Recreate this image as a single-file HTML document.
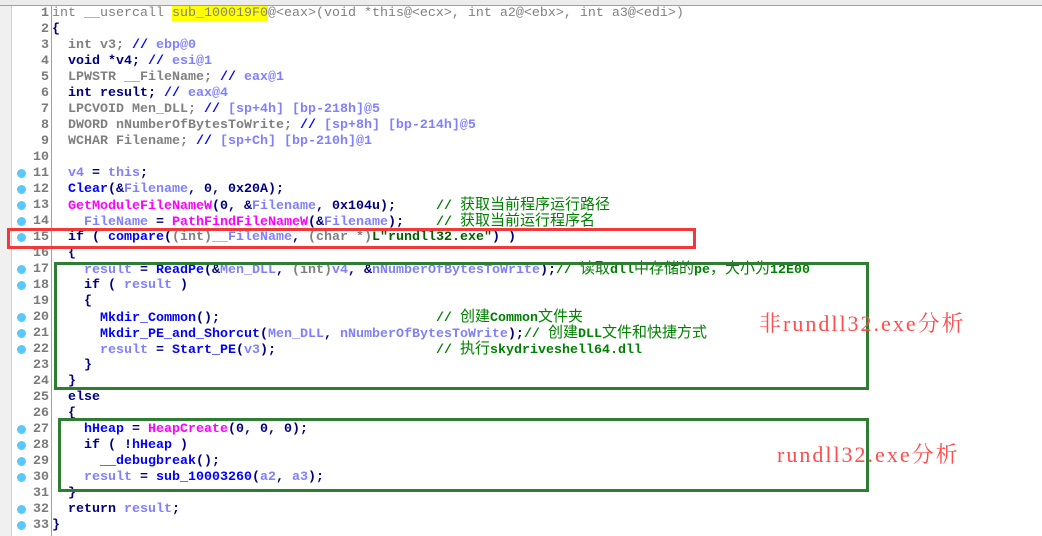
<!DOCTYPE html>
<html><head><meta charset="utf-8"><style>
body{margin:0;width:1042px;height:536px;background:#fff;position:relative;overflow:hidden;font-family:"Liberation Mono","Noto Sans CJK SC",monospace;}
.top{position:absolute;left:0;top:0;width:1042px;height:5px;background:#ececec;border-bottom:1px solid #a0a0a0;}
.left{position:absolute;left:0;top:6px;width:11px;height:530px;background:#f0f0f0;border-right:1px solid #d0d0d0;}
.sep{position:absolute;left:51px;top:6px;width:1px;height:530px;background:#a0a0a0;}
.ln{position:absolute;left:12px;width:37px;text-align:right;font-weight:bold;font-size:13.33px;color:#7a7a7a;line-height:16px;height:16px;}
.dot{position:absolute;left:17px;width:9px;height:9px;border-radius:50%;background:#5ac8fa;}
.c{position:absolute;left:52px;white-space:pre;font-weight:bold;font-size:13.33px;line-height:16px;height:16px;color:#000080;}
.k{color:#000080}.g{color:#808080;font-weight:normal}.gb{color:#808080}.b{color:#0000ff}.v{color:#8080ff}.m{color:#ff00ff}.cm{color:#008000}.s{color:#006000}
.z{font-size:15px;font-weight:normal}
.hl{background:#ffff00}
.box{position:absolute;box-sizing:border-box;}
.ann{position:absolute;font-family:"Liberation Serif","Noto Serif CJK SC",serif;font-size:22px;color:#ff4d4d;white-space:nowrap;line-height:24px;letter-spacing:2px;}
</style></head><body>
<div class="top"></div><div class="left"></div><div class="sep"></div>

<div class="ln" style="top:6px">1</div><div class="c" style="top:6px"><span class="g">int __usercall </span><span class="hl g">sub_100019F0</span><span class="g">@&lt;eax&gt;(void *this@&lt;ecx&gt;, int a2@&lt;ebx&gt;, int a3@&lt;edi&gt;)</span></div>
<div class="ln" style="top:22px">2</div><div class="c" style="top:22px">{</div>
<div class="ln" style="top:38px">3</div><div class="c" style="top:38px">  <span class="gb">int v3;</span> <span class="b">//</span> <span class="v">ebp@0</span></div>
<div class="ln" style="top:54px">4</div><div class="c" style="top:54px">  void *v4; <span class="b">//</span> <span class="v">esi@1</span></div>
<div class="ln" style="top:70px">5</div><div class="c" style="top:70px">  <span class="gb">LPWSTR __FileName;</span> <span class="b">//</span> <span class="v">eax@1</span></div>
<div class="ln" style="top:86px">6</div><div class="c" style="top:86px">  int result; <span class="b">//</span> <span class="v">eax@4</span></div>
<div class="ln" style="top:102px">7</div><div class="c" style="top:102px">  <span class="gb">LPCVOID Men_DLL;</span> <span class="b">//</span> <span class="v">[sp+4h] [bp-218h]@5</span></div>
<div class="ln" style="top:118px">8</div><div class="c" style="top:118px">  <span class="gb">DWORD nNumberOfBytesToWrite;</span> <span class="b">//</span> <span class="v">[sp+8h] [bp-214h]@5</span></div>
<div class="ln" style="top:134px">9</div><div class="c" style="top:134px">  <span class="gb">WCHAR Filename;</span> <span class="b">//</span> <span class="v">[sp+Ch] [bp-210h]@1</span></div>
<div class="ln" style="top:150px">10</div>
<div class="dot" style="top:169px"></div><div class="ln" style="top:166px">11</div><div class="c" style="top:166px">  <span class="v">v4</span> = <span class="v">this</span>;</div>
<div class="dot" style="top:185px"></div><div class="ln" style="top:182px">12</div><div class="c" style="top:182px">  <span class="b">Clear</span>(&amp;<span class="v">Filename</span>, 0, 0x20A);</div>
<div class="dot" style="top:201px"></div><div class="ln" style="top:198px">13</div><div class="c" style="top:198px">  <span class="m">GetModuleFileNameW</span>(0, &amp;<span class="v">Filename</span>, 0x104u);     <span class="cm">// <span class="z">获取当前程序运行路径</span></span></div>
<div class="dot" style="top:217px"></div><div class="ln" style="top:214px">14</div><div class="c" style="top:214px">    <span class="v">FileName</span> = <span class="m">PathFindFileNameW</span>(&amp;<span class="v">Filename</span>);    <span class="cm">// <span class="z">获取当前运行程序名</span></span></div>
<div class="dot" style="top:233px"></div><div class="ln" style="top:230px">15</div><div class="c" style="top:230px">  if ( <span class="b">compare</span>(<span class="gb">(int)</span><span class="v">__FileName</span>, <span class="gb">(char *)</span><span class="s">L"rundll32.exe"</span>) )</div>
<div class="ln" style="top:246px">16</div><div class="c" style="top:246px">  {</div>
<div class="dot" style="top:265px"></div><div class="ln" style="top:262px">17</div><div class="c" style="top:262px">    <span class="v">result</span> = <span class="b">ReadPe</span>(&amp;<span class="v">Men_DLL</span>, <span class="gb">(int)</span><span class="v">v4</span>, &amp;<span class="v">nNumberOfBytesToWrite</span>);<span class="cm">// <span class="z">读取</span>dll<span class="z">中存储的</span>pe<span class="z">，大小为</span>12E00</span></div>
<div class="dot" style="top:281px"></div><div class="ln" style="top:278px">18</div><div class="c" style="top:278px">    if ( <span class="v">result</span> )</div>
<div class="ln" style="top:294px">19</div><div class="c" style="top:294px">    {</div>
<div class="dot" style="top:313px"></div><div class="ln" style="top:310px">20</div><div class="c" style="top:310px">      <span class="b">Mkdir_Common</span>();                           <span class="cm">// <span class="z">创建</span>Common<span class="z">文件夹</span></span></div>
<div class="dot" style="top:329px"></div><div class="ln" style="top:326px">21</div><div class="c" style="top:326px">      <span class="b">Mkdir_PE_and_Shorcut</span>(<span class="v">Men_DLL</span>, <span class="v">nNumberOfBytesToWrite</span>);<span class="cm">// <span class="z">创建</span>DLL<span class="z">文件和快捷方式</span></span></div>
<div class="dot" style="top:345px"></div><div class="ln" style="top:342px">22</div><div class="c" style="top:342px">      <span class="v">result</span> = <span class="b">Start_PE</span>(<span class="v">v3</span>);                    <span class="cm">// <span class="z">执行</span>skydriveshell64.dll</span></div>
<div class="ln" style="top:358px">23</div><div class="c" style="top:358px">    }</div>
<div class="ln" style="top:374px">24</div><div class="c" style="top:374px">  }</div>
<div class="ln" style="top:390px">25</div><div class="c" style="top:390px">  else</div>
<div class="ln" style="top:406px">26</div><div class="c" style="top:406px">  {</div>
<div class="dot" style="top:425px"></div><div class="ln" style="top:422px">27</div><div class="c" style="top:422px">    <span class="b">hHeap</span> = <span class="m">HeapCreate</span>(0, 0, 0);</div>
<div class="dot" style="top:441px"></div><div class="ln" style="top:438px">28</div><div class="c" style="top:438px">    if ( !<span class="b">hHeap</span> )</div>
<div class="dot" style="top:457px"></div><div class="ln" style="top:454px">29</div><div class="c" style="top:454px">      <span class="b">__debugbreak</span>();</div>
<div class="dot" style="top:473px"></div><div class="ln" style="top:470px">30</div><div class="c" style="top:470px">    <span class="v">result</span> = <span class="b">sub_10003260</span>(<span class="v">a2</span>, <span class="v">a3</span>);</div>
<div class="ln" style="top:486px">31</div><div class="c" style="top:486px">  }</div>
<div class="dot" style="top:505px"></div><div class="ln" style="top:502px">32</div><div class="c" style="top:502px">  return <span class="v">result</span>;</div>
<div class="dot" style="top:521px"></div><div class="ln" style="top:518px">33</div><div class="c" style="top:518px">}</div>

<div class="box" style="left:7px;top:228px;width:689px;height:21px;border:3px solid #f03a3a"></div>
<div class="box" style="left:54px;top:262px;width:815px;height:128px;border:3px solid #2e7d32"></div>
<div class="box" style="left:58px;top:418px;width:811px;height:74px;border:3px solid #2e7d32"></div>

<div class="ann" style="left:759px;top:312px">非rundll32.exe分析</div>
<div class="ann" style="left:777px;top:443px">rundll32.exe分析</div>
</body></html>
